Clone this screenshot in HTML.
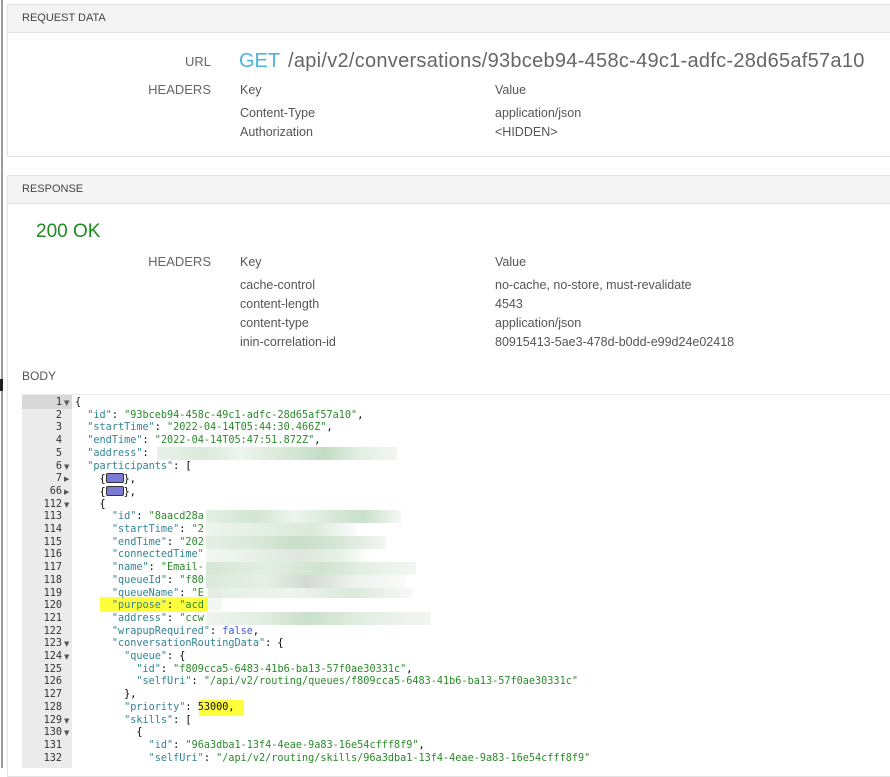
<!DOCTYPE html>
<html><head><meta charset="utf-8"><style>
body{margin:0;width:890px;height:768px;background:#fff;position:relative;overflow:hidden;font-family:"Liberation Sans",Arial,sans-serif;}
.a{position:absolute;}
.vl{left:1px;top:0;width:2px;height:768px;background:#9a9a9a;}
.panel{border:1px solid #e3e3e3;border-right:none;background:#fff;}
.ph{background:#f4f4f4;border-bottom:1px solid #e3e3e3;height:27px;font-size:11px;color:#444;line-height:27px;padding-left:14px;}
.lbl{font-size:13px;color:#666;text-align:right;width:100px;}
.t{font-size:12.5px;color:#555;}
.code{left:22px;top:394px;width:868px;height:374px;background:#fff;border-top:1px solid #e8e8e8;}
.gut{left:22px;top:394px;width:50px;height:374px;background:#ebebeb;}
.L{position:absolute;margin-top:2px;height:12.7px;overflow:visible;font-family:"DejaVu Sans Mono","Liberation Mono",monospace;font-size:10.2px;line-height:12.7px;white-space:pre;}
.N{left:20px;width:42px;text-align:right;color:#333;}
.ar{position:absolute;margin-top:2px;left:64px;font-size:7px;color:#555;font-family:"DejaVu Sans",sans-serif;line-height:12.7px;}
.C{left:75px;}
.k{color:#318495}.s{color:#2a8a2a}.b{color:#4455dd}.n{color:#111}
</style></head><body>
<div class="a vl"></div>

<div class="a panel" style="left:7px;top:4px;width:883px;height:151px;">
<div class="ph">REQUEST DATA</div>
</div>
<div class="a lbl" style="left:111px;top:54px;">URL</div>
<div class="a" style="left:239px;top:50px;font-size:20px;color:#4ab3e0;">GET</div>
<div class="a" style="left:288px;top:50px;font-size:20px;color:#666;letter-spacing:0.28px;">/api/v2/conversations/93bceb94-458c-49c1-adfc-28d65af57a10</div>
<div class="a lbl" style="left:111px;top:82px;">HEADERS</div>
<div class="a t" style="left:240px;top:83px;">Key</div>
<div class="a t" style="left:495px;top:83px;">Value</div>
<div class="a t" style="left:240px;top:106px;">Content-Type</div>
<div class="a t" style="left:495px;top:106px;">application/json</div>
<div class="a t" style="left:240px;top:125px;">Authorization</div>
<div class="a t" style="left:495px;top:125px;">&lt;HIDDEN&gt;</div>

<div class="a panel" style="left:7px;top:175px;width:883px;height:600px;">
<div class="ph">RESPONSE</div>
</div>
<div class="a" style="left:36px;top:221px;font-size:19px;color:#1e8c1e;">200 OK</div>
<div class="a lbl" style="left:111px;top:254px;">HEADERS</div>
<div class="a t" style="left:240px;top:255px;">Key</div>
<div class="a t" style="left:495px;top:255px;">Value</div>
<div class="a t" style="left:240px;top:278px;">cache-control</div>
<div class="a t" style="left:495px;top:278px;">no-cache, no-store, must-revalidate</div>
<div class="a t" style="left:240px;top:297px;">content-length</div>
<div class="a t" style="left:495px;top:297px;">4543</div>
<div class="a t" style="left:240px;top:316px;">content-type</div>
<div class="a t" style="left:495px;top:316px;">application/json</div>
<div class="a t" style="left:240px;top:335px;">inin-correlation-id</div>
<div class="a t" style="left:495px;top:335px;">80915413-5ae3-478d-b0dd-e99d24e02418</div>
<div class="a" style="left:22px;top:369px;font-size:12px;color:#555;">BODY</div>
<div class="a" style="left:0;top:379px;width:3px;height:12px;background:#222;"></div>

<div class="a code"></div>
<div class="a gut"></div>
<div class="a" style="left:22px;top:395px;width:50px;height:14px;background:#d8d8d8;"></div>

<div class="a" style="left:100px;top:597px;width:108px;height:15px;background:#ffff3c;"></div>
<div class="a" style="left:199px;top:700px;width:45px;height:16px;background:#ffff3c;"></div>

<div class="L N" style="top:395px">1</div><div class="ar" style="top:395px">▼</div>
<div class="L N" style="top:407.7px">2</div>
<div class="L N" style="top:420.4px">3</div>
<div class="L N" style="top:433.1px">4</div>
<div class="L N" style="top:445.8px">5</div>
<div class="L N" style="top:458.5px">6</div><div class="ar" style="top:458.5px">▼</div>
<div class="L N" style="top:471.2px">7</div><div class="ar" style="top:471.2px">▶</div>
<div class="L N" style="top:483.9px">66</div><div class="ar" style="top:483.9px">▶</div>
<div class="L N" style="top:496.6px">112</div><div class="ar" style="top:496.6px">▼</div>
<div class="L N" style="top:509.3px">113</div>
<div class="L N" style="top:522px">114</div>
<div class="L N" style="top:534.7px">115</div>
<div class="L N" style="top:547.4px">116</div>
<div class="L N" style="top:560.1px">117</div>
<div class="L N" style="top:572.8px">118</div>
<div class="L N" style="top:585.5px">119</div>
<div class="L N" style="top:598.2px">120</div>
<div class="L N" style="top:610.9px">121</div>
<div class="L N" style="top:623.6px">122</div>
<div class="L N" style="top:636.3px">123</div><div class="ar" style="top:636.3px">▼</div>
<div class="L N" style="top:649px">124</div><div class="ar" style="top:649px">▼</div>
<div class="L N" style="top:661.7px">125</div>
<div class="L N" style="top:674.4px">126</div>
<div class="L N" style="top:687.1px">127</div>
<div class="L N" style="top:699.8px">128</div>
<div class="L N" style="top:712.5px">129</div><div class="ar" style="top:712.5px">▼</div>
<div class="L N" style="top:725.2px">130</div><div class="ar" style="top:725.2px">▼</div>
<div class="L N" style="top:737.9px">131</div>
<div class="L N" style="top:750.6px">132</div>

<div class="L C" style="top:395px"><span class="n">{</span></div>
<div class="L C" style="top:407.7px">  <span class="k">"id"</span>: <span class="s">"93bceb94-458c-49c1-adfc-28d65af57a10"</span>,</div>
<div class="L C" style="top:420.4px">  <span class="k">"startTime"</span>: <span class="s">"2022-04-14T05:44:30.466Z"</span>,</div>
<div class="L C" style="top:433.1px">  <span class="k">"endTime"</span>: <span class="s">"2022-04-14T05:47:51.872Z"</span>,</div>
<div class="L C" style="top:445.8px">  <span class="k">"address"</span>:</div>
<div class="L C" style="top:458.5px">  <span class="k">"participants"</span>: [</div>
<div class="L C" style="top:471.2px">    {<span style="display:inline-block;width:16px;height:8px;background:#7b7bd6;border:1px solid #333;border-radius:2px;vertical-align:-1px;"></span>},</div>
<div class="L C" style="top:483.9px">    {<span style="display:inline-block;width:16px;height:8px;background:#7b7bd6;border:1px solid #333;border-radius:2px;vertical-align:-1px;"></span>},</div>
<div class="L C" style="top:496.6px">    {</div>
<div class="L C" style="top:509.3px">      <span class="k">"id"</span>: <span class="s">"8aacd28a</span></div>
<div class="L C" style="top:522px">      <span class="k">"startTime"</span>: <span class="s">"2</span></div>
<div class="L C" style="top:534.7px">      <span class="k">"endTime"</span>: <span class="s">"202</span></div>
<div class="L C" style="top:547.4px">      <span class="k">"connectedTime"</span></div>
<div class="L C" style="top:560.1px">      <span class="k">"name"</span>: <span class="s">"Email-</span></div>
<div class="L C" style="top:572.8px">      <span class="k">"queueId"</span>: <span class="s">"f80</span></div>
<div class="L C" style="top:585.5px">      <span class="k">"queueName"</span>: <span class="s">"E</span></div>
<div class="L C" style="top:598.2px">      <span class="k">"purpose"</span>: <span class="s">"acd</span></div>
<div class="L C" style="top:610.9px">      <span class="k">"address"</span>: <span class="s">"ccw</span></div>
<div class="L C" style="top:623.6px">      <span class="k">"wrapupRequired"</span>: <span class="b">false</span>,</div>
<div class="L C" style="top:636.3px">      <span class="k">"conversationRoutingData"</span>: {</div>
<div class="L C" style="top:649px">        <span class="k">"queue"</span>: {</div>
<div class="L C" style="top:661.7px">          <span class="k">"id"</span>: <span class="s">"f809cca5-6483-41b6-ba13-57f0ae30331c"</span>,</div>
<div class="L C" style="top:674.4px">          <span class="k">"selfUri"</span>: <span class="s">"/api/v2/routing/queues/f809cca5-6483-41b6-ba13-57f0ae30331c"</span></div>
<div class="L C" style="top:687.1px">        },</div>
<div class="L C" style="top:699.8px">        <span class="k">"priority"</span>: <span class="n">53000</span>,</div>
<div class="L C" style="top:712.5px">        <span class="k">"skills"</span>: [</div>
<div class="L C" style="top:725.2px">          {</div>
<div class="L C" style="top:737.9px">            <span class="k">"id"</span>: <span class="s">"96a3dba1-13f4-4eae-9a83-16e54cfff8f9"</span>,</div>
<div class="L C" style="top:750.6px">            <span class="k">"selfUri"</span>: <span class="s">"/api/v2/routing/skills/96a3dba1-13f4-4eae-9a83-16e54cfff8f9"</span></div>

<!-- blurred regions -->
<div class="a" style="left:157px;top:447px;width:240px;height:13px;background:linear-gradient(90deg,#e8f0e8,#dbe9db 20%,#eef4ee 35%,#d6e7d6 55%,#c3dcc3 70%,#e4efe4 85%,#f2f5f2);"></div>
<div class="a" style="left:206px;top:510px;width:195px;height:13px;background:linear-gradient(90deg,#e4efe4,#d2e5d2 25%,#eef4ee 45%,#d8e8d8 65%,#c9e0c9 80%,#f5f7f5);"></div>
<div class="a" style="left:206px;top:523px;width:150px;height:13px;background:linear-gradient(90deg,#eef4ee,#e3eee3 40%,#dbe9db 70%,#fafafa);"></div>
<div class="a" style="left:206px;top:536px;width:180px;height:13px;background:linear-gradient(90deg,#e4efe4,#d7e8d7 30%,#c8dfc8 50%,#d2e5d2 70%,#f4f6f4);"></div>
<div class="a" style="left:206px;top:549px;width:165px;height:13px;background:linear-gradient(90deg,#f4f7f4,#e8f0e8 30%,#dfe6df 55%,#e6f0e6 80%,#fff);"></div>
<div class="a" style="left:206px;top:562px;width:210px;height:13px;background:linear-gradient(90deg,#d6e7d6,#e2eee2 30%,#cfe3cf 55%,#e8f1e8 80%,#f3f6f3);"></div>
<div class="a" style="left:206px;top:575px;width:200px;height:13px;background:linear-gradient(90deg,#dbe9db,#e6f0e6 30%,#d4d8d4 50%,#eef3ee 75%,#fafafa);"></div>
<div class="a" style="left:208px;top:588px;width:205px;height:10px;background:linear-gradient(90deg,#e3eee3,#eef4ee 40%,#dbe9db 70%,#f8f8f8);"></div>
<div class="a" style="left:208px;top:598px;width:14px;height:13px;background:#f4f6f4;"></div>
<div class="a" style="left:206px;top:612px;width:225px;height:13px;background:linear-gradient(90deg,#eef4ee,#e3eee3 25%,#c9e0c9 45%,#e3eee3 70%,#f3f6f3);"></div>
</body></html>
